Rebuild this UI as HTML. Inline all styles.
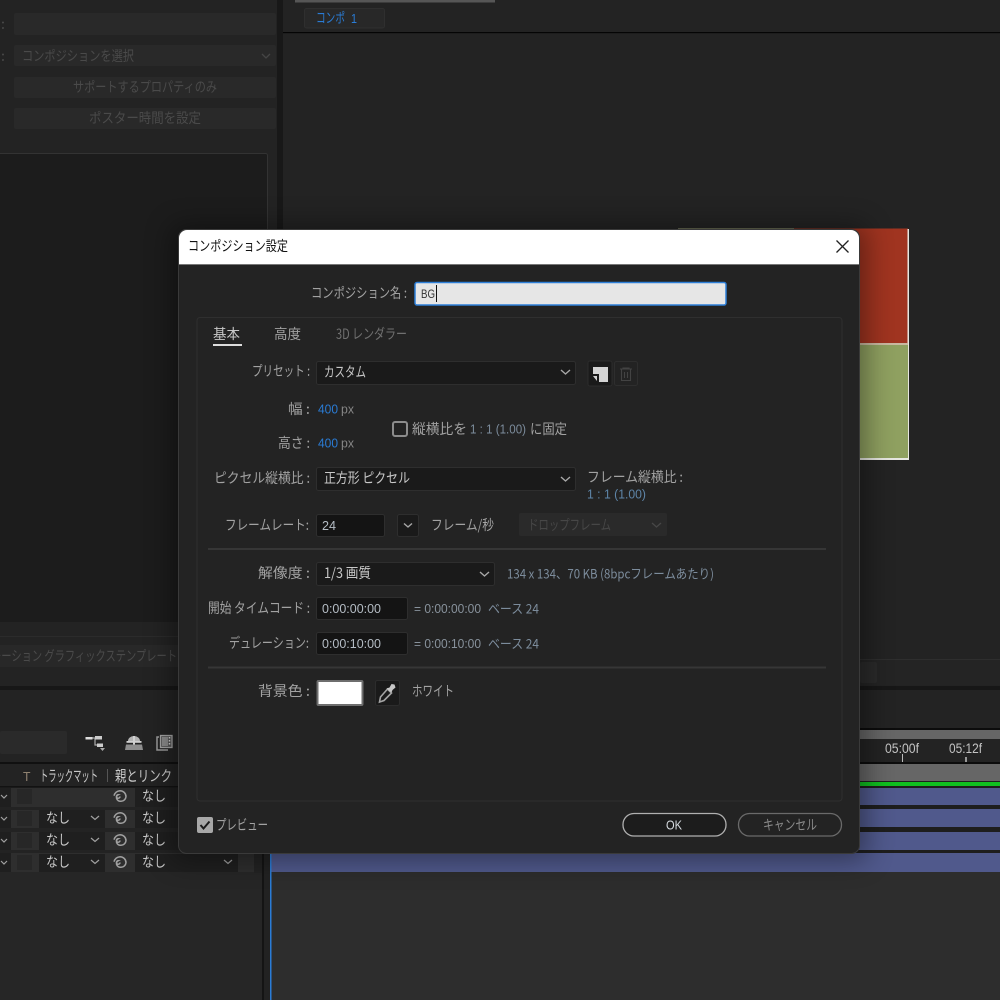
<!DOCTYPE html>
<html lang="ja"><head><meta charset="utf-8"><title>コンポジション設定</title>
<style>
html,body{margin:0;padding:0;width:1000px;height:1000px;background:#232323;overflow:hidden}
svg{display:block}
text{font-family:"Liberation Sans","Noto Sans CJK JP",sans-serif;font-size:14px;fill:#a2a2a2}
.j{font-family:"Noto Sans CJK JP","Liberation Sans",sans-serif}
.v{fill:#c8c8c8}.d{fill:#4a4a4a}.m{fill:#7c8c9c}.b{fill:#2a7cd6}.g{fill:#868686}
.f{fill:#1a1a1a;stroke:#2e2e2e;stroke-width:1}
.c{fill:none;stroke:#a8a8a8;stroke-width:1.4}
</style></head><body>
<svg width="1000" height="1000" viewBox="0 0 1000 1000" xmlns="http://www.w3.org/2000/svg">
<defs><filter id="s" x="-10%" y="-10%" width="120%" height="120%"><feGaussianBlur stdDeviation="14"/></filter>
<path id="sp" d="M0 .5a1.800 1.800 0 1 1-1.800-1.800 3.500 3.500 0 0 0-1.700 3.500 4 4 0 0 0 4.500 3 5 5 0 0 0 5-4.500 6 6 0 0 0-6-6 6.500 6.500 0 0 0-6 5" fill="none" stroke="#a0a0a0" stroke-width="1.500"/></defs>
<rect width="1000" height="1000" fill="#232323"/>
<!-- left upper panel -->
<rect x="277" y="0" width="6" height="686" fill="#181818"/>
<rect x="14" y="13" width="262" height="22" rx="2" fill="#292929"/>
<rect x="14" y="45" width="262" height="21" rx="2" fill="#292929"/>
<rect x="14" y="77" width="262" height="21" rx="2" fill="#292929"/>
<rect x="14" y="108" width="262" height="21" rx="2" fill="#292929"/>
<text class="j d" x="1" y="29" textLength="4" lengthAdjust="spacingAndGlyphs">:</text>
<text class="j d" x="1" y="61" textLength="4" lengthAdjust="spacingAndGlyphs">:</text>
<text class="j d" x="22" y="61" textLength="112" lengthAdjust="spacingAndGlyphs">コンポジションを選択</text>
<path d="M262 54l4 4 4-4" fill="none" stroke="#454545" stroke-width="1.3"/>
<text class="j d" x="73" y="92" textLength="144" lengthAdjust="spacingAndGlyphs">サポートするプロパティのみ</text>
<text class="j d" x="89" y="123" textLength="112" lengthAdjust="spacingAndGlyphs">ポスター時間を設定</text>
<rect x="-2" y="153.500" width="269.500" height="472" rx="2" fill="#1c1c1c" stroke="#333"/>
<rect x="0" y="622" width="277" height="14" fill="#232323"/>
<rect x="0" y="636" width="277" height="1" fill="#2b2b2b"/>
<rect x="0" y="645" width="178" height="22" fill="#282828"/>
<text class="j d" x="-9" y="661" textLength="186" lengthAdjust="spacingAndGlyphs">モーション グラフィックステンプレート</text>
<!-- right upper panel -->
<rect x="295" y="0" width="200" height="2.500" fill="#565656"/>
<rect x="304.500" y="8.500" width="80" height="19.500" rx="2" fill="#282828" stroke="#2f2f2f"/>
<text class="j b" x="316" y="23" textLength="29" lengthAdjust="spacingAndGlyphs">コンポ</text>
<text class="b" x="351" y="23" textLength="6" lengthAdjust="spacingAndGlyphs" style="font-size:13px">1</text>
<rect x="283" y="32" width="717" height="1.200" fill="#050505"/>
<!-- preview -->
<rect x="678" y="228.500" width="116" height="3" fill="#a3a77c"/>
<rect x="794" y="228.500" width="114" height="115" fill="#a03420"/>
<rect x="907.500" y="229" width="1.500" height="231" fill="#e6e6e0"/>
<rect x="678" y="345" width="230" height="113" fill="#8fa060"/>
<rect x="678" y="458" width="231" height="2" fill="#e6e6e0"/>
<rect x="678" y="343" width="230" height="2" fill="#c9b8a0"/>
<!-- divider strip -->
<rect x="283" y="659" width="717" height="1" fill="#2e2e2e"/>
<rect x="283" y="660" width="717" height="25" fill="#242424"/>
<rect x="860" y="662" width="17" height="21" rx="2" fill="#2a2a2a"/>
<rect x="0" y="686" width="1000" height="4" fill="#171717"/>
<rect x="0" y="690" width="1000" height="39" fill="#232323"/>
<!-- timeline left -->
<rect x="0" y="731" width="67" height="23" rx="2" fill="#2a2a2a"/>
<path d="M92 738h3v7h2" fill="none" stroke="#aaa" stroke-width="1.200"/>
<rect x="85.500" y="737" width="7" height="2.500" fill="#ddd"/><rect x="95" y="736" width="7" height="3.500" fill="#ccc"/><rect x="97" y="743.500" width="6" height="3.500" fill="#ccc"/>
<path d="M100 748h5l-2.500 3z" fill="#aaa"/>
<path d="M128 741a6 5 0 0 1 12 0z" fill="#b4b4b4"/><rect x="126.500" y="741" width="15" height="1.800" fill="#d0d0d0"/><rect x="133" y="736" width="2" height="10" fill="#d0d0d0"/>
<path d="M126 744.500h16l1 5.500h-18z" fill="#8e8e8e"/>
<rect x="160.500" y="735.500" width="11.500" height="12" fill="#555" stroke="#a4a4a4" stroke-width="1.300"/>
<rect x="162" y="737" width="6" height="9" fill="#8a8a8a"/>
<path d="M169.500 737v1.500M169.500 740v1.500M169.500 743v1.500" stroke="#d0d0d0" stroke-width="1.500"/>
<path d="M159 737h-2v13h11" fill="none" stroke="#9a9a9a" stroke-width="1.500"/>
<rect x="0" y="762" width="262" height="2" fill="#101010"/>
<rect x="0" y="764" width="262" height="22" fill="#232323"/>
<rect x="0" y="786" width="262" height="1.500" fill="#121212"/>
<text x="23" y="781" textLength="7.500" lengthAdjust="spacingAndGlyphs" style="font-size:13px;fill:#8f8270">T</text>
<text class="j v" x="40" y="781" textLength="58" lengthAdjust="spacingAndGlyphs" style="font-size:15px">トラックマット</text>
<rect x="107" y="769" width="1" height="13" fill="#555"/>
<text class="j v" x="115" y="781" textLength="57" lengthAdjust="spacingAndGlyphs" style="font-size:15px">親とリンク</text>
<!-- rows -->
<g fill="#2e2e2e">
<rect x="0" y="788" width="254" height="19"/><rect x="0" y="810" width="254" height="18"/><rect x="0" y="832" width="254" height="18"/><rect x="0" y="853" width="254" height="19"/>
</g>
<g fill="#1f1f1f">
<rect x="0" y="788" width="11" height="19"/><rect x="0" y="810" width="11" height="18"/><rect x="0" y="832" width="11" height="18"/><rect x="0" y="853" width="11" height="19"/>
<rect x="39" y="810" width="66" height="18"/><rect x="39" y="832" width="66" height="18"/><rect x="39" y="854" width="66" height="18"/>
<rect x="135" y="788" width="103" height="19"/><rect x="135" y="810" width="103" height="18"/><rect x="135" y="832" width="103" height="18"/><rect x="135" y="854" width="103" height="18"/>
</g>
<g fill="#272727">
<rect x="17" y="789" width="15" height="15"/><rect x="17" y="811" width="15" height="15"/><rect x="17" y="833" width="15" height="15"/><rect x="17" y="855" width="15" height="15"/>
</g>
<g fill="none" stroke="#a0a0a0" stroke-width="1.200">
<path d="M1 795l3 3 3-3M1 817l3 3 3-3M1 839l3 3 3-3M1 861l3 3 3-3"/>
<path d="M91 816l4 3.500 4-3.500M91 838l4 3.500 4-3.500M91 860l4 3.500 4-3.500M224 860l4 3.500 4-3.500"/>
</g>
<use href="#sp" x="120" y="796"/><use href="#sp" x="120" y="818"/><use href="#sp" x="120" y="840"/><use href="#sp" x="120" y="862"/>
<text class="j v" x="46" y="823" textLength="24" lengthAdjust="spacingAndGlyphs">なし</text>
<text class="j v" x="46" y="845" textLength="24" lengthAdjust="spacingAndGlyphs">なし</text>
<text class="j v" x="46" y="867" textLength="24" lengthAdjust="spacingAndGlyphs">なし</text>
<text class="j v" x="142" y="801" textLength="24" lengthAdjust="spacingAndGlyphs">なし</text>
<text class="j v" x="142" y="823" textLength="24" lengthAdjust="spacingAndGlyphs">なし</text>
<text class="j v" x="142" y="845" textLength="24" lengthAdjust="spacingAndGlyphs">なし</text>
<text class="j v" x="142" y="867" textLength="24" lengthAdjust="spacingAndGlyphs">なし</text>
<rect x="0" y="872" width="262" height="128" fill="#262626"/>
<rect x="254" y="787" width="8" height="86" fill="#232323"/>
<rect x="262" y="729" width="2" height="271" fill="#141414"/>
<rect x="264" y="729" width="736" height="144" fill="#1e1e1e"/>
<rect x="264" y="872" width="736" height="128" fill="#2d2d2d"/>
<rect x="264" y="853" width="7" height="147" fill="#222"/>
<!-- timeline right -->
<rect x="264" y="728" width="736" height="2" fill="#0c0c0c"/>
<rect x="264" y="730" width="736" height="9" fill="#666"/>
<rect x="264" y="739" width="736" height="23" fill="#232323"/>
<rect x="264" y="762" width="736" height="2" fill="#0c0c0c"/>
<rect x="264" y="764" width="736" height="17" fill="#666"/>
<rect x="264" y="782" width="736" height="4" fill="#10c020"/>
<rect x="271" y="788" width="729" height="17" fill="#50598c"/>
<rect x="271" y="809" width="729" height="18" fill="#50598c"/>
<rect x="271" y="832" width="729" height="18" fill="#50598c"/>
<rect x="271" y="853" width="729" height="19" fill="#50598c"/>
<text x="885" y="753" textLength="34" lengthAdjust="spacingAndGlyphs" style="font-size:13.500px;fill:#c4c4c4">05:00f</text>
<text x="949" y="753" textLength="33" lengthAdjust="spacingAndGlyphs" style="font-size:13.500px;fill:#c4c4c4">05:12f</text>
<rect x="902" y="754" width="1" height="8" fill="#bbb"/><rect x="965" y="757" width="2" height="5" fill="#999"/>
<rect x="270" y="853" width="1.500" height="147" fill="#2a7cd6"/>
<!-- dialog -->
<rect x="172" y="226" width="694" height="634" fill="#000" opacity=".4" filter="url(#s)"/>
<rect x="178.500" y="229.500" width="681" height="624" rx="8" fill="#232323" stroke="#3a3a3a"/>
<path d="M179 264V238a8 8 0 0 1 8-8H851a8 8 0 0 1 8 8V264z" fill="#fff"/>
<rect x="179" y="264" width="680" height="1" fill="#777"/>
<text class="j" style="fill:#111" x="188" y="251" textLength="100" lengthAdjust="spacingAndGlyphs">コンポジション設定</text>
<path d="M836.500 240.500l12 12M848.500 240.500l-12 12" stroke="#222" stroke-width="1.300" fill="none"/>
<text class="j" x="311" y="298" textLength="96" lengthAdjust="spacingAndGlyphs">コンポジション名 :</text>
<rect x="415" y="282.500" width="311" height="22.500" rx="2" fill="#e6e6e6" stroke="#2d7fd8" stroke-width="1.500"/>
<text style="font-size:12px;fill:#333" x="421" y="298" textLength="14" lengthAdjust="spacingAndGlyphs">BG</text>
<rect x="436" y="285" width="1" height="17" fill="#111"/>
<rect x="197" y="317.500" width="645" height="483.500" rx="3" fill="#232323" stroke="#2f2f2f"/>
<text class="j v" x="213" y="339" textLength="27" lengthAdjust="spacingAndGlyphs">基本</text>
<rect x="213" y="344" width="29" height="2" fill="#ddd"/>
<text class="j" x="274" y="339" textLength="27" lengthAdjust="spacingAndGlyphs">高度</text>
<text class="j" style="fill:#707070" x="336" y="339" textLength="71" lengthAdjust="spacingAndGlyphs">3D レンダラー</text>
<text class="j" x="252" y="376" textLength="58" lengthAdjust="spacingAndGlyphs">プリセット :</text>
<rect class="f" x="316.500" y="361.500" width="259" height="23" rx="2"/>
<text class="j v" x="324" y="377" textLength="42" lengthAdjust="spacingAndGlyphs">カスタム</text>
<path class="c" d="M561 370l4.500 4 4.500-4"/>
<rect x="588" y="361" width="24" height="25" rx="2" fill="#1a1a1a" stroke="#2c2c2c"/>
<path d="M593 367H608V382H599V374H593Z" fill="#d4d4d4"/><path d="M593 376H597V381Z" fill="#d4d4d4"/>
<rect x="614.500" y="361.500" width="23" height="24" rx="2" fill="#232323" stroke="#2e2e2e"/>
<path d="M620 369h12M623 369v-1h6v1M621.500 369.500v11h9v-11M624.500 372v6M627.500 372v6" fill="none" stroke="#434343" stroke-width="1.100"/>
<text class="j" x="288" y="414" textLength="22" lengthAdjust="spacingAndGlyphs">幅 :</text>
<text class="b" x="318" y="413.500" textLength="20" lengthAdjust="spacingAndGlyphs" style="font-size:13px">400</text>
<text class="g" x="341" y="413.500" textLength="13" lengthAdjust="spacingAndGlyphs" style="font-size:13px">px</text>
<text class="j" x="278" y="448" textLength="32" lengthAdjust="spacingAndGlyphs">高さ :</text>
<text class="b" x="318" y="447.500" textLength="20" lengthAdjust="spacingAndGlyphs" style="font-size:13px">400</text>
<text class="g" x="341" y="447.500" textLength="13" lengthAdjust="spacingAndGlyphs" style="font-size:13px">px</text>
<rect x="393" y="422" width="14" height="14" rx="2" fill="none" stroke="#8c8c8c" stroke-width="2"/>
<text class="j" x="412" y="434" textLength="55" lengthAdjust="spacingAndGlyphs">縦横比を</text>
<text class="m" x="470" y="433.500" textLength="56" lengthAdjust="spacingAndGlyphs" style="font-size:13px">1 : 1 (1.00)</text>
<text class="j" x="530" y="434" textLength="37" lengthAdjust="spacingAndGlyphs">に固定</text>
<text class="j" x="214" y="483" textLength="96" lengthAdjust="spacingAndGlyphs">ピクセル縦横比 :</text>
<rect class="f" x="316.500" y="467.500" width="259" height="23" rx="2"/>
<text class="j v" x="324" y="483" textLength="86" lengthAdjust="spacingAndGlyphs">正方形 ピクセル</text>
<path class="c" d="M561 477l4.500 4 4.500-4"/>
<text class="j" x="587" y="482" textLength="96" lengthAdjust="spacingAndGlyphs">フレーム縦横比 :</text>
<text style="fill:#5e85a8;font-size:13px" x="587" y="498.500" textLength="59" lengthAdjust="spacingAndGlyphs">1 : 1 (1.00)</text>
<text class="j" x="225" y="530" textLength="84" lengthAdjust="spacingAndGlyphs">フレームレート:</text>
<rect class="f" x="316.500" y="514.500" width="68" height="22" rx="2" style="fill:#141414"/>
<text style="font-size:13px;fill:#b4bcc4" x="322" y="530" textLength="14" lengthAdjust="spacingAndGlyphs">24</text>
<rect class="f" x="397.500" y="514.500" width="21" height="22" rx="2"/>
<path class="c" d="M404 523.500l4 3.500 4-3.500"/>
<text class="j" x="431" y="530" textLength="63" lengthAdjust="spacingAndGlyphs">フレーム/秒</text>
<rect x="519" y="513" width="148" height="23" rx="2" fill="#2a2a2a"/>
<text class="j" style="fill:#474747" x="528" y="530" textLength="83" lengthAdjust="spacingAndGlyphs">ドロップフレーム</text>
<path d="M652 523l4.500 4 4.500-4" fill="none" stroke="#474747" stroke-width="1.300"/>
<rect x="208" y="548" width="618" height="2" fill="#363636"/>
<text class="j" x="258" y="578" textLength="52" lengthAdjust="spacingAndGlyphs">解像度 :</text>
<rect class="f" x="316.500" y="562.500" width="178" height="23" rx="2"/>
<text class="j v" x="324" y="578" textLength="47" lengthAdjust="spacingAndGlyphs">1/3 画質</text>
<path class="c" d="M480 572l4.500 4 4.500-4"/>
<text class="j m" x="507" y="578.500" textLength="207" lengthAdjust="spacingAndGlyphs" style="font-size:13px">134 x 134、70 KB (8bpcフレームあたり)</text>
<text class="j" x="208" y="613" textLength="102" lengthAdjust="spacingAndGlyphs">開始 タイムコード :</text>
<rect class="f" x="316.500" y="597.500" width="91" height="22" rx="2" style="fill:#141414"/>
<text style="font-size:13px;fill:#b4bcc4" x="322" y="613" textLength="59" lengthAdjust="spacingAndGlyphs">0:00:00:00</text>
<text style="font-size:13px;fill:#88929c" x="414" y="613" textLength="67" lengthAdjust="spacingAndGlyphs">= 0:00:00:00</text>
<text class="j m" x="488" y="613.500" textLength="51" lengthAdjust="spacingAndGlyphs" style="font-size:13px">ベース 24</text>
<text class="j" x="229" y="648" textLength="80" lengthAdjust="spacingAndGlyphs">デュレーション:</text>
<rect class="f" x="316.500" y="632.500" width="91" height="22" rx="2" style="fill:#141414"/>
<text style="font-size:13px;fill:#b4bcc4" x="322" y="648" textLength="59" lengthAdjust="spacingAndGlyphs">0:00:10:00</text>
<text style="font-size:13px;fill:#88929c" x="414" y="648" textLength="67" lengthAdjust="spacingAndGlyphs">= 0:00:10:00</text>
<text class="j m" x="488" y="648.500" textLength="51" lengthAdjust="spacingAndGlyphs" style="font-size:13px">ベース 24</text>
<rect x="208" y="666.500" width="618" height="2" fill="#363636"/>
<text class="j" x="258" y="696" textLength="52" lengthAdjust="spacingAndGlyphs">背景色 :</text>
<rect x="317.500" y="681" width="45" height="24" rx="1" fill="#fff" stroke="#6e6e6e" stroke-width="2"/>
<rect x="375.500" y="680.500" width="24" height="25" rx="2" fill="#1a1a1a" stroke="#2c2c2c"/>
<path d="M379.500 702l1-5 7-8 4 4-7.500 7.500z" fill="none" stroke="#a4a4a4" stroke-width="1.600"/>
<path d="M386.500 688.500l3-1 2-3.500 3 .5 1 3-3 2.500-1 2.500z" fill="#c8c8c8"/>
<text class="j" x="412" y="696" textLength="42" lengthAdjust="spacingAndGlyphs">ホワイト</text>
<rect x="197" y="817" width="16" height="16" rx="2" fill="#a8a8a8"/>
<path d="M200.500 825l3 3.500 6-7" fill="none" stroke="#1c1c1c" stroke-width="2"/>
<text class="j" x="216" y="830" textLength="52" lengthAdjust="spacingAndGlyphs">プレビュー</text>
<rect x="623" y="813.500" width="103" height="22.500" rx="11" fill="#1c1c1c" stroke="#b0b0b0" stroke-width="1.300"/>
<text style="font-size:13px;fill:#d8dde2" x="666" y="829.500" textLength="16" lengthAdjust="spacingAndGlyphs">OK</text>
<rect x="738.500" y="813.500" width="103" height="22.500" rx="11" fill="#232323" stroke="#6a6a6a" stroke-width="1.300"/>
<text class="j" style="fill:#8a8a8a" x="763" y="830" textLength="54" lengthAdjust="spacingAndGlyphs">キャンセル</text>
</svg>
</body></html>
